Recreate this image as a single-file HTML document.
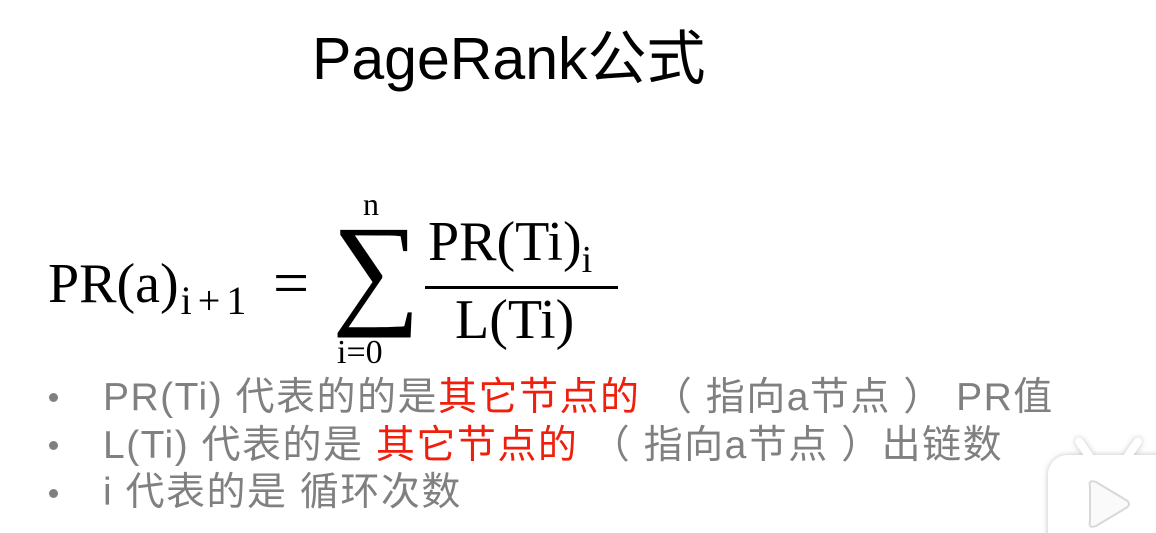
<!DOCTYPE html>
<html><head><meta charset="utf-8"><style>
html,body{margin:0;width:1156px;height:533px;overflow:hidden}
body{background:#fff;position:relative}
.a{position:absolute;white-space:nowrap}
.t{font-family:"Liberation Sans","Noto Sans CJK SC",sans-serif;font-size:59px;color:#000;left:312px;top:24px;line-height:70px}
.m{font-family:"Liberation Serif","DejaVu Serif",serif;color:#000}
.b{font-family:"Liberation Sans","Noto Sans CJK SC",sans-serif;font-size:39px;color:#808080;left:103px;line-height:48px;letter-spacing:1.5px}
.r{color:#f01e0a}
.d{position:absolute;left:49px;width:9px;height:9px;border-radius:50%;background:#808080}
</style></head><body>
<div class="a t">PageRank公式</div>
<div class="a m" style="left:48px;top:252px;font-size:56px">PR(a)<span style="font-size:40px;position:relative;top:12px;letter-spacing:6px;margin-left:2px">i+1</span></div>
<div class="a m" style="left:273px;top:246px;font-size:64px">=</div>
<div class="a m" style="left:332px;top:200px;font-size:124px;line-height:140px">∑</div>
<div class="a m" style="left:363px;top:186px;font-size:32px">n</div>
<div class="a m" style="left:337px;top:334px;font-size:34px">i=0</div>
<div class="a m" style="left:428px;top:210px;font-size:56px">PR(Ti)<span style="font-size:38px;position:relative;top:12px">i</span></div>
<div style="position:absolute;left:425px;top:286px;width:193px;height:3px;background:#000"></div>
<div class="a m" style="left:455px;top:288px;font-size:56px">L(Ti)</div>
<div class="d" style="top:393px"></div>
<div class="d" style="top:441px"></div>
<div class="d" style="top:489px"></div>
<div class="a b" style="top:374px">PR(Ti) 代表的的是<span class="r">其它节点的</span> （ 指向a节点 ） PR值</div>
<div class="a b" style="top:422px">L(Ti) 代表的是 <span class="r">其它节点的</span> （ 指向a节点 ）出链数</div>
<div class="a b" style="top:469px">i 代表的是 循环次数</div>
<svg class="a" style="left:1040px;top:430px" width="116" height="103" viewBox="0 0 116 103">
<defs><filter id="s" x="-20%" y="-20%" width="140%" height="140%"><feDropShadow dx="0" dy="0" stdDeviation="3" flood-color="#000" flood-opacity="0.25"/></filter></defs>
<g filter="url(#s)" fill="#fff">
<rect x="41" y="6" width="8" height="28" rx="4" transform="rotate(-35 45 20)"/>
<rect x="88" y="6" width="8" height="28" rx="4" transform="rotate(35 92 20)"/>
<rect x="8" y="25" width="130" height="110" rx="20"/>
</g>
<path d="M50 57 Q48 49 56 52 L86 70 Q92 74 86 78 L56 96 Q48 99 50 91 Z" fill="#fafafa" stroke="#d8d8d8" stroke-width="2"/>
</svg>
</body></html>
